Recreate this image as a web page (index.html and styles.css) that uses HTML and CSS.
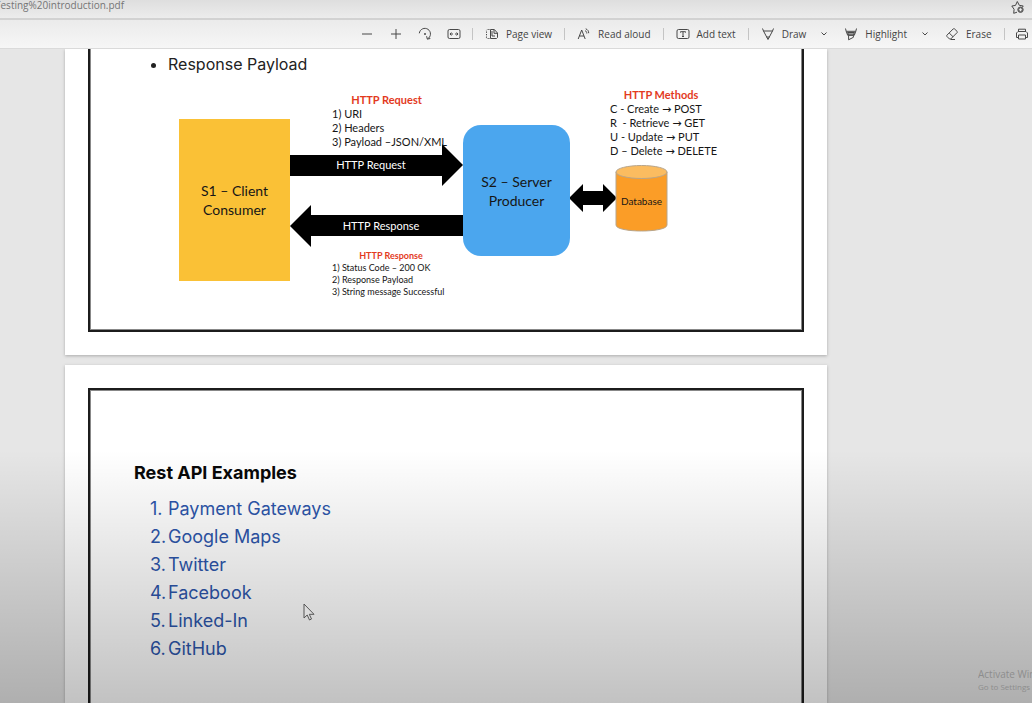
FILE: index.html
```html
<!DOCTYPE html>
<html lang="en">
<head>
<meta charset="utf-8">
<title>Testing introduction.pdf</title>
<link rel="stylesheet" href="styles.css">
</head>
<body>
<div class="viewer">
  <header class="address-bar">
    <span class="url">Testing%20introduction.pdf</span>
    <button class="icon-button favorite" aria-label="Add to favorites">
      <svg class="icon" viewBox="0 0 14 14"><path d="M6 12.2l-3.3 1.1.4-4L.8 6l3.7-.6L6.3 1.5l2 3.800 4 .7-1.2 1.3"/><circle cx="9.5" cy="9.7" r="2.7" fill="#777" stroke="#555"/><path d="M9.5 8.3v2.8M8.1 9.7h2.8" stroke="#eee"/></svg>
    </button>
  </header>

  <nav class="toolbar" aria-label="PDF tools">
    <button class="icon-button" aria-label="Zoom out"><svg class="icon" viewBox="0 0 14 14"><path d="M2 7h10"/></svg></button>
    <button class="icon-button" aria-label="Zoom in"><svg class="icon" viewBox="0 0 14 14"><path d="M2 7h10M7 2v10"/></svg></button>
    <button class="icon-button" aria-label="Rotate"><svg class="icon" viewBox="0 0 14 14"><path d="M1.300 6.300A5.600 5.600 0 1 1 9.500 11.900M8.600 9.200l.7 2.900 3-.6"/><circle cx="7" cy="7" r="1" fill="#484848" stroke="none"/></svg></button>
    <button class="icon-button" aria-label="Fit to width"><svg class="icon" viewBox="0 0 14 14"><rect x="1" y="2.500" width="12" height="9" rx="1.500"/><path d="M3 7h3M8 7h3M4.400 5.500L3 7l1.400 1.500M9.600 5.500L11 7 9.600 8.500"/></svg></button>
    <span class="separator fit-end"></span>
    <button class="tool"><svg class="icon" viewBox="0 0 14 14"><path d="M4.500 2.500H3.300M2.300 2.500l-.8.800M1.500 4.500v1.300M1.500 7v1.300M1.500 9.500v1.200l.8.800M3.300 11.500h1.200M5.500 2.500v9h6l1-1V6L9.300 2.500H5.500M9 2.700v3.600h3.300M7 4v5h3"/></svg>Page view</button>
    <span class="separator"></span>
    <button class="tool"><svg class="icon" viewBox="0 0 14 14"><path d="M1.200 12L4.700 3l3.500 9M2.400 9H7M8 3.700c1.300.5 1.800 1.300 1.800 2.800M8.700 1.800c2 .7 3 2.200 3 4.400"/></svg>Read aloud</button>
    <span class="separator"></span>
    <button class="tool"><svg class="icon" viewBox="0 0 14 14"><rect x="1" y="2.500" width="12" height="9" rx="1.500"/><path d="M4.500 5.600V4.700h5v.9M7 4.700v4.800M6 9.500h2"/></svg>Add text</button>
    <span class="separator"></span>
    <button class="tool"><svg class="icon" viewBox="0 0 14 14"><path d="M1.500 1.500l1 2.500L7 12.500 11.500 4l1-2.500M2.500 4h9M5.500 10h3"/></svg>Draw</button>
    <button class="more" aria-label="Draw options"><svg class="chevron" viewBox="0 0 8 8"><path d="M1.500 2.500L4 5l2.500-2.500"/></svg></button>
    <button class="tool"><svg class="icon" viewBox="0 0 14 14"><path d="M1.500 1.500l.7 2.800h9.600l.7-2.800M2.200 4.300l1.500 4h6.600l1.500-4M4.600 8.500v4.300l4.800-2.500V8.500"/><path d="M3.500 5.500h7l-1 2.500h-5z" fill="#999"/></svg>Highlight</button>
    <button class="more" aria-label="Highlight options"><svg class="chevron" viewBox="0 0 8 8"><path d="M1.500 2.500L4 5l2.500-2.500"/></svg></button>
    <button class="tool"><svg class="icon" viewBox="0 0 14 14"><path d="M8.300 1.800L1.800 8.300v1L4.500 12h1.200l6.500-6.500v-1L9.400 1.800zM4.200 6l3.900 3.800M5.500 12.500H10"/></svg>Erase</button>
    <span class="separator"></span>
    <button class="icon-button print" aria-label="Print"><svg class="icon" viewBox="0 0 14 14"><path d="M3.500 4.500V2.200h7v2.300M3.500 10.500h-2V6L3 4.500h8L12.500 6v4.500h-2M3.500 8h7v4h-7z"/></svg></button>
  </nav>

  <main class="document">
    <section class="page page-first">
      <div class="frame frame-first">
        <ul class="topics"><li>Response Payload</li></ul>
        <div class="diagram">
          <svg class="shapes" width="600" height="220" viewBox="0 0 600 220" aria-hidden="true">
            <path d="M199 71h152V60l21 21-21 21V92H199z"/>
            <path d="M372 131H220v-10l-21 21 21 21v-11h152z"/>
            <path d="M478 114l14-14v7h20v-7l14 14-14 14v-7h-20v7z"/>
            <path d="M525 88v53c0 8 51 8 51 0V88z" fill="#fb9d27" stroke="#b7a58c"/>
            <ellipse cx="550.5" cy="88" rx="25.5" ry="6.500" fill="#fbbc60" stroke="#b7a58c"/>
          </svg>
          <div class="node client">S1 – Client<br>Consumer</div>
          <div class="node server">S2 – Server<br>Producer</div>
          <div class="arrow-label request-arrow">HTTP Request</div>
          <div class="arrow-label response-arrow">HTTP Response</div>
          <div class="database">Database</div>
          <div class="note request">
            <h3>HTTP Request</h3>
            <p>1) URI</p><p>2) Headers</p><p>3) Payload –JSON/XML</p>
          </div>
          <div class="note response">
            <h3>HTTP Response</h3>
            <p>1) Status Code – 200 OK</p><p>2) Response Payload</p><p>3) String message Successful</p>
          </div>
          <div class="note methods">
            <h3>HTTP Methods</h3>
            <p>C - Create <span class="to">→</span> POST</p><p>R&nbsp; - Retrieve <span class="to">→</span> GET</p><p>U - Update <span class="to">→</span> PUT</p><p>D – Delete <span class="to">→</span> DELETE</p>
          </div>
        </div>
      </div>
    </section>

    <section class="page page-second">
      <div class="frame frame-second">
        <h2>Rest API Examples</h2>
        <ol class="examples">
          <li>Payment Gateways</li>
          <li>Google Maps</li>
          <li>Twitter</li>
          <li>Facebook</li>
          <li>Linked-In</li>
          <li>GitHub</li>
        </ol>
      </div>
    </section>
  </main>

  <div class="shade"></div>
  <svg class="cursor" viewBox="0 0 12 18" aria-hidden="true"><path d="M1 1v14l3.200-3 2.300 5 2-1-2.200-4.700H11z"/></svg>
  <aside class="watermark"><p class="activate">Activate Windows</p><p class="settings">Go to Settings to activate Windows.</p></aside>
</div>
</body>
</html>
```
FILE: styles.css
```css
* { box-sizing: border-box; }
body, h2, h3, p, ul, ol { margin: 0; padding: 0; }
button { border: 0; background: none; padding: 0; color: inherit; font: inherit; }

.viewer {
  position: relative;
  display: flex;
  flex-direction: column;
  height: 100vh;
  overflow: hidden;
  background: #e6e6e6;
  font-family: "Open Sans", "Noto Sans", sans-serif;
}

.address-bar {
  display: flex;
  flex: none;
  align-items: flex-start;
  justify-content: space-between;
  height: 20px;
  padding-right: 7px;
  overflow: hidden;
  border-bottom: 2px solid #d2d2d2;
  background: linear-gradient(#dedede, #ececec);
  color: #757575;
}
.url { margin-left: -5px; font: 10px/11px "Open Sans", sans-serif; }

.toolbar {
  display: flex;
  flex: none;
  align-items: center;
  height: 29px;
  padding-left: 352px;
  overflow: hidden;
  border-bottom: 1px solid #dadada;
  background: linear-gradient(#ebebeb, #f6f6f6);
  color: #444;
  font-size: 10px;
  white-space: nowrap;
}
.icon, .chevron { flex: none; fill: none; stroke: #484848; stroke-width: 1; }
.icon { width: 14px; height: 14px; }
.chevron { width: 8px; height: 8px; }
.icon-button { display: flex; flex: none; justify-content: center; width: 29px; }
.favorite { width: 14px; }
.tool { display: flex; flex: none; align-items: center; gap: 7px; padding: 0 12px; }
.more { display: flex; flex: none; padding: 0 4px 0 2px; }
.separator { flex: none; width: 1px; height: 12px; background: #c4c4c4; }
.fit-end { margin-left: 4px; }
.print { width: 34px; }

.document {
  display: flex;
  flex: 1;
  flex-direction: column;
  gap: 10px;
  min-height: 0;
  padding: 0 205px 0 65px;
  overflow: hidden;
}
.page { flex: none; padding: 23px; background: #fff; box-shadow: 0 1px 3px #aaa; }
.page-first { padding-top: 0; }
.page-second { flex: 1; padding-bottom: 0; }
.frame { border: 2px solid #1c1c1c; outline: 1px solid #888; outline-offset: -3px; padding: 1px; background: #fff; }
.frame-first { margin-top: -4px; padding-top: 4px; border-top: 0; }
.frame-second { height: calc(100% + 4px); padding: 69px 44px 0; }

.topics {
  padding: 3px 0 0 77px;
  color: #222;
  font: 16px/24px Inter, sans-serif;
}
.diagram {
  position: relative;
  height: 253px;
  color: #161616;
  font-family: Lato, sans-serif;
  white-space: nowrap;
}
.shapes { position: absolute; top: 8px; left: 0; }
.node {
  position: absolute;
  display: flex;
  align-items: center;
  justify-content: center;
  font-size: 14px;
  line-height: 19px;
  text-align: center;
}
.client { top: 43px; left: 88px; width: 111px; height: 162px; background: #fac136; }
.server { top: 49px; left: 372px; width: 107px; height: 131px; border-radius: 18px; background: #4ba6ee; }
.arrow-label { position: absolute; width: 120px; color: #fff; font-size: 11px; line-height: 16px; text-align: center; }
.request-arrow { top: 81px; left: 220px; }
.response-arrow { top: 142px; left: 230px; }
.database { position: absolute; top: 118px; left: 525px; width: 51px; font-size: 10px; line-height: 14px; text-align: center; }
.note { position: absolute; font-size: 11px; line-height: 14px; }
.note h3 { color: #e33a1e; font-size: inherit; text-align: center; }
.request { top: 17px; left: 241px; width: 109px; }
.response { top: 174px; left: 241px; width: 118px; font-size: 9px; line-height: 12px; }
.methods { top: 12px; left: 519px; width: 102px; }
.to { font: 11px/11px "DejaVu Sans", sans-serif; }

.frame-second h2 { color: #080808; font: 700 18px/28px Inter, sans-serif; }
.examples { padding: 8px 0 0 16px; color: #2d56ab; font: 18px/28px Inter, sans-serif; }
.examples li { list-style: none; display: flex; counter-increment: example; }
.examples li::before { content: counter(example) "."; flex: none; width: 18px; }

.shade {
  position: absolute;
  inset: 0;
  background: linear-gradient(transparent 64%, rgba(0, 0, 0, .24));
  pointer-events: none;
}
.cursor { position: absolute; top: 603px; left: 303px; width: 12px; height: 18px; fill: #ddd; stroke: #555; }
.watermark {
  position: absolute;
  right: 0;
  bottom: 10px;
  width: 54px;
  overflow: hidden;
  color: #8d8d8d;
  white-space: nowrap;
}
.activate { font-size: 10px; line-height: 14px; }
.settings { font-size: 8px; line-height: 12px; }
```
